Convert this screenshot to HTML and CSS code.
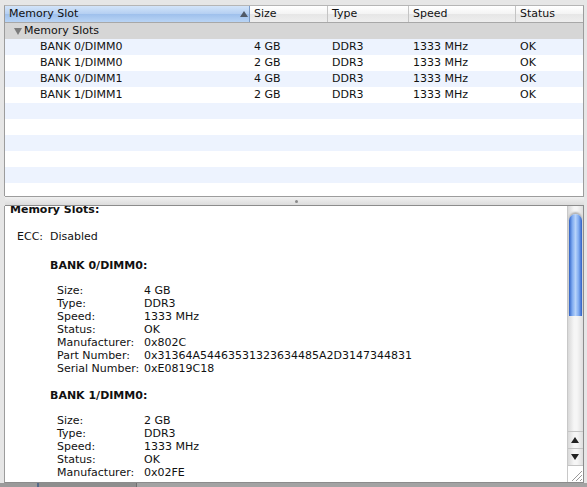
FILE: index.html
```html
<!DOCTYPE html>
<html lang="en">
  <head>
    <meta charset="UTF-8" />
    <title>Memory</title>
    <link rel="stylesheet" href="styles.css">
  </head>
  <body>
    <div class="window">

      <div class="table-pane">
        <div class="row header">
          <div class="col sorted">Memory Slot <span class="sort-arrow"></span></div>
          <div class="col">Size</div>
          <div class="col">Type</div>
          <div class="col">Speed</div>
          <div class="col">Status</div>
        </div>
        <div class="group"><span class="disclosure"></span>Memory Slots</div>
        <div class="row item odd">
          <div class="cell name">BANK 0/DIMM0</div><div class="cell">4 GB</div><div class="cell">DDR3</div><div class="cell">1333 MHz</div><div class="cell">OK</div>
        </div>
        <div class="row item">
          <div class="cell name">BANK 1/DIMM0</div><div class="cell">2 GB</div><div class="cell">DDR3</div><div class="cell">1333 MHz</div><div class="cell">OK</div>
        </div>
        <div class="row item odd">
          <div class="cell name">BANK 0/DIMM1</div><div class="cell">4 GB</div><div class="cell">DDR3</div><div class="cell">1333 MHz</div><div class="cell">OK</div>
        </div>
        <div class="row item">
          <div class="cell name">BANK 1/DIMM1</div><div class="cell">2 GB</div><div class="cell">DDR3</div><div class="cell">1333 MHz</div><div class="cell">OK</div>
        </div>
        <div class="row item odd"></div>
        <div class="row item"></div>
        <div class="row item odd"></div>
        <div class="row item"></div>
        <div class="row item odd"></div>
        <div class="row item last"></div>
      </div>

      <div class="splitter"><span class="dimple"></span></div>

      <div class="detail-pane">
        <div class="detail-content">
          <div class="title">Memory Slots:</div>
          <div class="ecc"><span class="ecc-label">ECC:</span>Disabled</div>

          <div class="bank">
            <div class="bank-title">BANK 0/DIMM0:</div>
            <div class="fields">
              <div><span class="label">Size:</span>4 GB</div>
              <div><span class="label">Type:</span>DDR3</div>
              <div><span class="label">Speed:</span>1333 MHz</div>
              <div><span class="label">Status:</span>OK</div>
              <div><span class="label">Manufacturer:</span>0x802C</div>
              <div><span class="label">Part Number:</span>0x31364A54463531323634485A2D3147344831</div>
              <div><span class="label">Serial Number:</span>0xE0819C18</div>
            </div>
          </div>

          <div class="bank next">
            <div class="bank-title">BANK 1/DIMM0:</div>
            <div class="fields">
              <div><span class="label">Size:</span>2 GB</div>
              <div><span class="label">Type:</span>DDR3</div>
              <div><span class="label">Speed:</span>1333 MHz</div>
              <div><span class="label">Status:</span>OK</div>
              <div><span class="label">Manufacturer:</span>0x02FE</div>
            </div>
          </div>
        </div>

        <div class="scrollbar">
          <div class="track">
            <div class="thumb"></div>
          </div>
          <div class="arrow up"></div>
          <div class="arrow down"></div>
          <div class="grip">
            <svg width="15" height="16" viewBox="0 0 15 16">
              <line x1="4" y1="15" x2="14" y2="5" stroke="#9a9a9a" stroke-width="1" />
              <line x1="8" y1="15" x2="14" y2="9" stroke="#9a9a9a" stroke-width="1" />
              <line x1="12" y1="15" x2="14" y2="13" stroke="#9a9a9a" stroke-width="1" />
            </svg>
          </div>
        </div>
      </div>

      <div class="footer">
        <div class="footer-left"></div>
        <div class="footer-mid"></div>
        <div class="footer-right"></div>
      </div>
    </div>
  </body>
</html>
```

FILE: styles.css
```css
body {
  margin: 0;
  font-family: "DejaVu Sans", "Liberation Sans", sans-serif;
  font-size: 11px;
  color: #111;
  background: #e6e6e6;
}

.window {
  width: 587px;
  height: 487px;
  padding: 5px 3px 0 4px;
  box-sizing: border-box;
  display: flex;
  flex-direction: column;
}

/* top table */

.table-pane {
  border-left: 1px solid #9c9c9c;
  border-right: 1px solid #9c9c9c;
  border-top: 1px solid #b5b5b5;
  background: #fff;
  height: 190px;
  overflow: hidden;
}

.row {
  display: grid;
  grid-template-columns: 245px 78px 81px 107px 1fr;
}

.header {
  height: 16px;
  line-height: 16px;
  background: linear-gradient(#ffffff, #f3f3f3 50%, #e6e6e6 51%, #eeeeee);
  border-bottom: 1px solid #a8a8a8;
}

.header .col {
  padding-left: 4px;
  border-right: 1px solid #c4c4c4;
  position: relative;
}

.header .col:last-child {
  border-right: none;
}

.header .sorted {
  background: linear-gradient(#d3e4f9, #b4cff2 50%, #9ec0ec 51%, #b9d4f5);
  border-right: 1px solid #7c9cc8;
}

.sort-arrow {
  position: absolute;
  right: 1px;
  top: 5px;
  width: 0;
  height: 0;
  border-left: 4px solid transparent;
  border-right: 4px solid transparent;
  border-bottom: 6px solid #505a68;
}

.group {
  height: 16px;
  line-height: 16px;
  background: #d6d6d6;
  padding-left: 9px;
  display: flex;
  align-items: center;
}

.disclosure {
  width: 0;
  height: 0;
  border-left: 4px solid transparent;
  border-right: 4px solid transparent;
  border-top: 7px solid #7c7c7c;
  margin-right: 2px;
}

.item {
  height: 16px;
  line-height: 16px;
}

.item.odd {
  background: #edf3fe;
}

.item.last {
  height: 14px;
}

.cell {
  padding-left: 4px;
  white-space: nowrap;
}

.cell.name {
  padding-left: 35px;
}

/* split view divider */

.splitter {
  height: 8px;
  border-top: 1px solid #9d9d9d;
  border-bottom: 1px solid #8c8c8c;
  background: linear-gradient(#f0f0f0, #dcdcdc);
  display: flex;
  justify-content: center;
  align-items: center;
  margin-left: 1px;
}

.dimple {
  width: 3px;
  height: 3px;
  border-radius: 50%;
  background: #8a8a8a;
  margin-left: 4px;
}

/* detail text */

.detail-pane {
  flex: 1;
  display: flex;
  background: #fff;
  border-left: 1px solid #9c9c9c;
  border-right: 1px solid #8c8c8c;
  border-bottom: 1px solid #8c8c8c;
  overflow: hidden;
  line-height: 13px;
}

.detail-content {
  flex: 1;
  padding-left: 5px;
  margin-top: -3px;
  white-space: nowrap;
}

.title,
.bank-title {
  font-weight: bold;
}

.ecc {
  margin-top: 14px;
  margin-left: 7px;
}

.ecc-label {
  display: inline-block;
  width: 33px;
}

.bank {
  margin-left: 40px;
  margin-top: 16px;
}

.bank.next {
  margin-top: 14px;
}

.fields {
  margin-top: 12px;
  margin-left: 7px;
}

.label {
  display: inline-block;
  width: 87px;
}

/* aqua scrollbar */

.scrollbar {
  width: 15px;
  display: flex;
  flex-direction: column;
  border-left: 1px solid #c8c8c8;
  background: linear-gradient(90deg, #d8d8d8, #f6f6f6 40%, #f6f6f6 60%, #dedede);
}

.track {
  flex: 1;
  padding-top: 8px;
}

.thumb {
  height: 102px;
  margin: 0 1px;
  border-radius: 7px 7px 0 0;
  background: linear-gradient(90deg, #2d5fc4, #7eaaf0 25%, #b7d3fa 50%, #7eaaf0 75%, #2d5fc4);
  box-shadow: 0 -2px 2px #b0b0b0;
}

.arrow {
  height: 16px;
  border-top: 1px solid #c4c4c4;
  position: relative;
}

.arrow.up::after,
.arrow.down::after {
  content: "";
  position: absolute;
  left: 3px;
  top: 5px;
  border-left: 4px solid transparent;
  border-right: 4px solid transparent;
}

.arrow.up::after {
  border-bottom: 6px solid #222;
}

.arrow.down::after {
  border-top: 6px solid #222;
}

.grip {
  height: 16px;
  border-top: 1px solid #c4c4c4;
  background: #fff;
}

.grip svg {
  display: block;
}

.footer {
  height: 4px;
  display: flex;
  margin: 0 -3px 0 -4px;
}

.footer-left {
  width: 37px;
  background: #9a9a9a;
  border-right: 2px solid #556a88;
}

.footer-mid {
  width: 97px;
  background: #8e8e8e;
  border-right: 1px solid #6f6f6f;
}

.footer-right {
  flex: 1;
  background: #a3a3a3;
}
```
